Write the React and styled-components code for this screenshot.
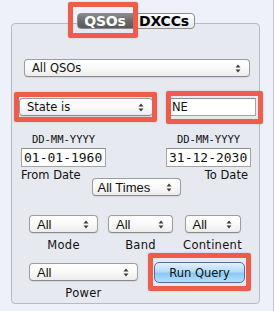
import styled, { createGlobalStyle } from 'styled-components';

const GlobalStyle = createGlobalStyle`
  html, body {
    margin: 0;
    padding: 0;
    background: #eef0fa;
  }
  body {
    font-family: "DejaVu Sans", "Liberation Sans", sans-serif;
    color: #111;
  }
`;

const Window = styled.div`
  width: 274px;
  height: 311px;
  box-sizing: border-box;
  padding-top: 13px;
  background: #eef0fa;
  border-right: 1px solid #c3c5cc;
`;

const TabBar = styled.div`
  position: relative;
  z-index: 1;
  display: flex;
  justify-content: center;
  width: 249px;
  margin-left: 11px;
`;

const Tab = styled.div`
  display: flex;
  justify-content: center;
  align-items: center;
  width: ${(p) => p.$width}px;
  height: 16px;
  box-sizing: border-box;
  font-size: 14px;
  font-weight: bold;
  letter-spacing: -0.2px;
  border: 1px solid #8c8c8c;
  border-radius: ${(p) => (p.$first ? '4px 0 0 4px' : '0 4px 4px 0')};
  color: ${(p) => (p.$active ? '#fff' : '#000')};
  background: ${(p) =>
    p.$active
      ? 'linear-gradient(#8a8a8a, #6a6a6a 50%, #5a5a5a)'
      : 'linear-gradient(#ffffff, #f4f4f4 50%, #e6e6e6)'};
`;

// red annotation frame laid over a control
const Highlight = styled.div`
  position: relative;
  display: flex;
  &::after {
    content: '';
    position: absolute;
    top: ${(p) => p.$t}px;
    right: ${(p) => p.$r}px;
    bottom: ${(p) => p.$b}px;
    left: ${(p) => p.$l}px;
    border: 5px solid #ee5d4b;
    border-radius: 2px;
    box-shadow: 0 0 2px rgba(0, 0, 0, 0.2);
    pointer-events: none;
  }
`;

const Panel = styled.div`
  display: flex;
  flex-direction: column;
  width: 249px;
  height: 281px;
  margin: -6px 0 0 11px;
  box-sizing: border-box;
  padding-top: 35px;
  border: 1px solid #b8bbc4;
  border-radius: 4px;
  background: #e7e9f1;
`;

const Row = styled.div`
  display: flex;
  justify-content: ${(p) => p.$justify || 'flex-start'};
  align-items: flex-start;
  margin-top: ${(p) => p.$top || 0}px;
  padding: 0 ${(p) => p.$right || 0}px 0 ${(p) => p.$left || 0}px;
  gap: ${(p) => p.$gap || 0}px;
`;

const PopUp = styled.div`
  display: flex;
  justify-content: space-between;
  align-items: center;
  width: ${(p) => p.$width}px;
  height: 18px;
  box-sizing: border-box;
  padding: 0 8px 0 ${(p) => p.$pad || 7}px;
  border: 1px solid #9d9d9d;
  border-bottom-color: #8a8a8a;
  border-radius: 4px;
  background: linear-gradient(#ffffff, #fafafa 50%, #ececec);
  box-shadow: 0 1px 1px rgba(0, 0, 0, 0.08);
  font-family: ${(p) =>
    p.$small ? '"Liberation Sans", Arial, sans-serif' : '"DejaVu Sans", sans-serif'};
  font-size: ${(p) => (p.$small ? 13 : 11.5)}px;
  white-space: nowrap;
`;

const Arrows = () => (
  <svg width="6" height="9" viewBox="0 0 6 9">
    <path d="M0.5 3.6 L3 0.6 L5.5 3.6 Z" fill="#3c3c3c" />
    <path d="M0.5 5.4 L3 8.4 L5.5 5.4 Z" fill="#3c3c3c" />
  </svg>
);

const Select = ({ children, ...props }) => (
  <PopUp {...props}>
    <span>{children}</span>
    <Arrows />
  </PopUp>
);

const TextField = styled.div`
  display: flex;
  align-items: center;
  width: ${(p) => p.$width}px;
  height: ${(p) => p.$height || 18}px;
  box-sizing: border-box;
  padding-left: 2px;
  border: 1px solid #a4a4a4;
  border-top-color: #8e8e8e;
  background: #fff;
  font-family: ${(p) => (p.$mono ? '"DejaVu Sans Mono", monospace' : '"DejaVu Sans", sans-serif')};
  font-size: ${(p) => (p.$mono ? 13 : 11.5)}px;
`;

const DateGrid = styled.div`
  display: grid;
  grid-template-columns: 85px 1fr 85px;
  grid-template-rows: 14px 19px 27px;
  row-gap: 2px;
  margin-top: 16px;
  padding: 0 8px 0 9px;
`;

const FormatHint = styled.div`
  justify-self: center;
  font-family: "DejaVu Sans Mono", monospace;
  font-size: 10.5px;
  line-height: 14px;
  grid-column: ${(p) => p.$col};
`;

const DateSlot = styled.div`
  grid-column: ${(p) => p.$col};
  grid-row: 2;
`;

const Caption = styled.div`
  grid-column: ${(p) => p.$col};
  grid-row: 3;
  align-self: start;
  justify-self: ${(p) => (p.$end ? 'end' : 'start')};
  padding-right: ${(p) => (p.$end ? 3 : 0)}px;
  margin-top: -1px;
  font-size: 11.5px;
  line-height: 14px;
`;

const TimeSlot = styled.div`
  grid-column: 1 / -1;
  grid-row: 3;
  align-self: end;
  justify-self: center;
`;

const Field = styled.div`
  display: flex;
  flex-direction: column;
  align-items: center;
`;

const FieldLabel = styled.div`
  margin-top: 5px;
  font-size: 11.5px;
  line-height: 14px;
  letter-spacing: 0.3px;
`;

const QueryButton = styled.button`
  width: 91px;
  height: 21px;
  margin-top: -1px;
  padding: 0;
  box-sizing: border-box;
  border: 1px solid #5b6d8c;
  border-radius: 5px;
  background: linear-gradient(#e1f1fe, #b7dcfa 45%, #8cc8f6 55%, #b5e0fd);
  font-family: "DejaVu Sans", sans-serif;
  font-size: 11.5px;
  color: #111;
`;

export default function App() {
  return (
    <>
      <GlobalStyle />
      <Window>
        <TabBar>
          <Highlight $t={-11} $r={-4} $b={-9} $l={-9}>
            <Tab $width={57} $first $active>QSOs</Tab>
          </Highlight>
          <Tab $width={61}>DXCCs</Tab>
        </TabBar>
        <Panel>
          <Row $left={12}>
            <Select $width={226}>All QSOs</Select>
          </Row>

          <Row $top={21} $left={7} $right={3} $justify="space-between">
            <Highlight $t={-6} $r={-4} $b={-6} $l={-5}>
              <Select $width={134}>State is</Select>
            </Highlight>
            <Highlight $t={-7} $r={-7} $b={-8} $l={-3}>
              <TextField $width={87}>NE</TextField>
            </Highlight>
          </Row>

          <DateGrid>
            <FormatHint $col={1}>DD-MM-YYYY</FormatHint>
            <FormatHint $col={3}>DD-MM-YYYY</FormatHint>
            <DateSlot $col={1}>
              <TextField $width={85} $height={19} $mono>01-01-1960</TextField>
            </DateSlot>
            <DateSlot $col={3}>
              <TextField $width={85} $height={19} $mono>31-12-2030</TextField>
            </DateSlot>
            <Caption $col={1}>From Date</Caption>
            <Caption $col={3} $end>To Date</Caption>
            <TimeSlot>
              <Select $width={89} $small $pad={5}>All Times</Select>
            </TimeSlot>
          </DateGrid>

          <Row $top={19} $left={17} $right={17} $justify="space-between">
            <Field>
              <Select $width={69} $small>All</Select>
              <FieldLabel>Mode</FieldLabel>
            </Field>
            <Field>
              <Select $width={65} $small>All</Select>
              <FieldLabel>Band</FieldLabel>
            </Field>
            <Field>
              <Select $width={56} $small>All</Select>
              <FieldLabel>Continent</FieldLabel>
            </Field>
          </Row>

          <Row $top={11} $left={17} $gap={16}>
            <Field>
              <Select $width={109} $small>All</Select>
              <FieldLabel>Power</FieldLabel>
            </Field>
            <Highlight $t={-10} $r={-6} $b={-8} $l={-6}>
              <QueryButton>Run Query</QueryButton>
            </Highlight>
          </Row>
        </Panel>
      </Window>
    </>
  );
}
